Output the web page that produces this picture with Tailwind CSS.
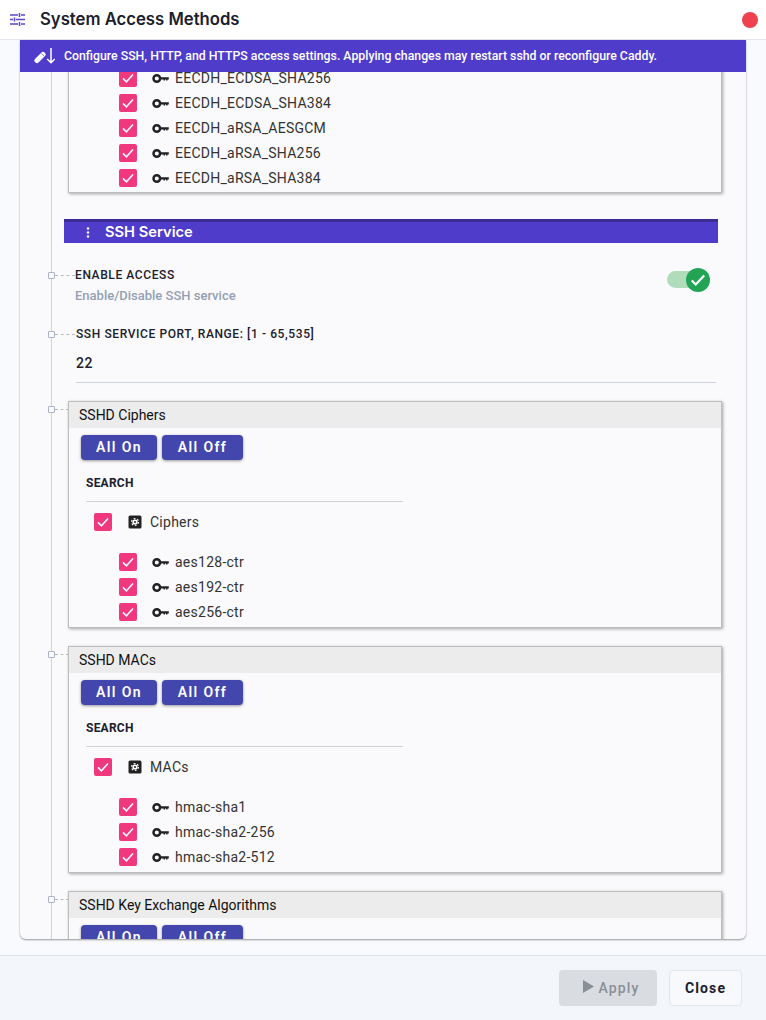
<!DOCTYPE html>
<html lang="en">

<head>
    <meta charset="UTF-8">
    <title>System Access Methods</title>
    <script src="https://cdn.jsdelivr.net/npm/@tailwindcss/browser@4"></script>
</head>

<body class="w-[766px] h-[1020px] overflow-hidden flex flex-col bg-[#f8fafd] font-['Roboto',sans-serif] text-[#222]">
    <svg class="hidden">
        <symbol id="key" viewBox="0 0 17 17"><circle cx="4.800" cy="8.500" r="3.300" fill="none" stroke="#222" stroke-width="2.500"/><path fill="#222" d="M8.500 7.200h8.300v2.400h-1.300v.8h-1.500v-.8h-1v.8h-1.500v-.8H8.500z"/></symbol>
        <symbol id="check" viewBox="0 0 18 18"><rect width="18" height="18" rx="2" fill="#f0387e"/><path d="M4 9.400l3.400 3.400L14 5.600" fill="none" stroke="#fff" stroke-width="1.500"/></symbol>
        <symbol id="gear" viewBox="0 0 16 16"><rect x="1.500" y="1.500" width="13" height="13" rx="1.500" fill="#222"/><circle cx="8" cy="8" r="2.600" fill="#fff"/><circle cx="8" cy="8" r="3.400" fill="none" stroke="#fff" stroke-width="1.300" stroke-dasharray="1.800 1.760"/><circle cx="8" cy="8" r="1" fill="#222"/></symbol>
    </svg>

    <!-- Header -->
    <div class="h-[40px] shrink-0 bg-white border-b border-[#e4e7ee] flex items-center pl-[10px] pr-[8px]">
        <svg class="w-[15px] h-[13px] text-[#5b48c9]" viewBox="0 0 15 13" fill="none" stroke="currentColor" stroke-width="1.500">
            <path d="M0 2h8M11 2h4M0 6.500h3M6 6.500h9M0 11h8M11 11h4M9.500 0v4M4.500 4.500v4M9.500 9v4"/>
        </svg>
        <h1 class="ml-[15px] text-[16.700px] font-semibold font-['Inter',sans-serif] text-[#1a202c]">System Access Methods</h1>
        <span class="ml-auto w-[16px] h-[16px] rounded-full bg-[#ef4050]"></span>
    </div>

    <!-- Panel -->
    <div class="mx-[20px] h-[899px] shrink-0 flex flex-col bg-[#fafafc] rounded-b-md shadow-[0_1px_2px_rgba(0,0,0,0.4)] overflow-hidden">
        <div class="h-[32px] shrink-0 bg-[#4f3ccb] flex items-center pl-[14px] text-white text-[12.300px] font-medium">
            <svg class="w-[21px] h-[16px] mr-[9px]" viewBox="0 0 21 16" fill="none" stroke="#fff">
                <path d="M3 12.500l6-6" stroke-width="5" stroke-linecap="round"/>
                <path d="M7.500 5.500l3 3" stroke="#4f3ccb" stroke-width="0.700"/>
                <path d="M17 0v14.500M13.200 11l3.800 3.800 3.800-3.800" stroke-width="1.500"/>
            </svg>
            Configure SSH, HTTP, and HTTPS access settings. Applying changes may restart sshd or reconfigure Caddy.
        </div>

        <div class="relative flex-1 overflow-hidden pl-[48px] pr-[24px]">
            <!-- timeline -->
            <div class="absolute left-[31px] top-0 bottom-0 w-px bg-[#cdd3e3]"></div>

            <!-- previous card, scrolled -->
            <div class="-mt-[6px] pb-[1px] pl-[50px] border border-t-0 border-[#bdbdbd] shadow-[1px_1px_3px_rgba(0,0,0,0.35)] text-[14px] tracking-[0.018em] text-[#333]">
                <div class="h-[25px] flex items-center"><svg class="w-[18px] h-[18px] -mt-[1px]"><use href="#check"/></svg><svg class="w-[17px] h-[17px] -mt-[1px] ml-[15px] mr-[6px]"><use href="#key"/></svg>EECDH_ECDSA_SHA256</div>
                <div class="h-[25px] flex items-center"><svg class="w-[18px] h-[18px] -mt-[1px]"><use href="#check"/></svg><svg class="w-[17px] h-[17px] -mt-[1px] ml-[15px] mr-[6px]"><use href="#key"/></svg>EECDH_ECDSA_SHA384</div>
                <div class="h-[25px] flex items-center"><svg class="w-[18px] h-[18px] -mt-[1px]"><use href="#check"/></svg><svg class="w-[17px] h-[17px] -mt-[1px] ml-[15px] mr-[6px]"><use href="#key"/></svg>EECDH_aRSA_AESGCM</div>
                <div class="h-[25px] flex items-center"><svg class="w-[18px] h-[18px] -mt-[1px]"><use href="#check"/></svg><svg class="w-[17px] h-[17px] -mt-[1px] ml-[15px] mr-[6px]"><use href="#key"/></svg>EECDH_aRSA_SHA256</div>
                <div class="h-[25px] flex items-center"><svg class="w-[18px] h-[18px] -mt-[1px]"><use href="#check"/></svg><svg class="w-[17px] h-[17px] -mt-[1px] ml-[15px] mr-[6px]"><use href="#key"/></svg>EECDH_aRSA_SHA384</div>
            </div>

            <!-- SSH Service -->
            <div class="mt-[26px] -ml-[4px] mr-[4px] h-[24px] bg-[#4f3ccb] border-t-[3px] border-[#3b2d96] flex items-center text-white">
                <svg class="ml-[22px] w-[4px] h-[11px]" viewBox="0 0 4 11" fill="#fff"><circle cx="2" cy="1.500" r="1.200"/><circle cx="2" cy="5.500" r="1.200"/><circle cx="2" cy="9.500" r="1.200"/></svg>
                <span class="ml-[15px] text-[14.700px] font-semibold font-['Inter',sans-serif]">SSH Service</span>
            </div>

            <!-- Enable access -->
            <div class="relative mt-[24px] h-[40px] ml-[7px] flex justify-between">
                <div class="absolute left-[-27px] top-[5px] w-[7px] h-[7px] border border-[#aab2c8] rounded-[1px] bg-[#fafafc]"></div>
                <div class="absolute left-[-20px] top-[8px] w-[20px] border-t border-dashed border-[#bbb]"></div>
                <div>
                    <div class="text-[12px] font-medium leading-[16px] tracking-[0.05em] text-[#1a202c]">ENABLE ACCESS</div>
                    <div class="mt-[5px] text-[13px] font-medium leading-[16px] text-[#94a0b4]">Enable/Disable SSH service</div>
                </div>
                <div class="relative w-[43px] h-[17px] mt-[4px] mr-[12px] rounded-full">
                    <div class="w-[33px] h-[17px] rounded-full bg-[#b0dcbc]"></div>
                    <div class="absolute right-0 top-[-3.500px] w-[24px] h-[24px] rounded-full bg-[#22a454] flex items-center justify-center">
                        <svg class="w-[18px] h-[18px]" viewBox="0 0 16 16" fill="none" stroke="#fff" stroke-width="2"><path d="M2.500 8.500l3.500 3.500 7.500-8"/></svg>
                    </div>
                </div>
            </div>

            <!-- Port -->
            <div class="relative mt-[19px] h-[57px] ml-[8px] mr-[6px] border-b border-[#cdd3e3]">
                <div class="absolute left-[-28px] top-[5px] w-[7px] h-[7px] border border-[#aab2c8] rounded-[1px] bg-[#fafafc]"></div>
                <div class="absolute left-[-21px] top-[8px] w-[20px] border-t border-dashed border-[#bbb]"></div>
                <div class="text-[12px] font-medium leading-[16px] tracking-[0.05em] text-[#1a202c]">SSH SERVICE PORT, RANGE: [1 - 65,535]</div>
                <div class="mt-[11px] text-[14px] font-medium tracking-[0.04em] leading-[20px] text-[#1a202c]">22</div>
            </div>

            <!-- SSHD Ciphers -->
            <div class="relative mt-[18px] h-[227px] border border-[#bdbdbd] shadow-[1px_1px_3px_rgba(0,0,0,0.35)]">
                <div class="absolute left-[-21px] top-[4px] w-[7px] h-[7px] border border-[#aab2c8] rounded-[1px] bg-[#fafafc]"></div>
                <div class="absolute left-[-14px] top-[7px] w-[14px] border-t border-dashed border-[#bbb]"></div>
                <div class="h-[26px] bg-[#ececec] pl-[10px] text-[14px] leading-[26px] text-[#111]">SSHD Ciphers</div>
                <div class="flex gap-[5px] mt-[7px] ml-[12px]">
                    <button class="w-[76px] h-[25px] rounded bg-[#4347ad] text-white text-[14px] font-semibold tracking-[0.1em] shadow-[0_1px_3px_rgba(0,0,0,0.4)]">All On</button>
                    <button class="w-[81px] h-[25px] rounded bg-[#4347ad] text-white text-[14px] font-semibold tracking-[0.1em] shadow-[0_1px_3px_rgba(0,0,0,0.4)]">All Off</button>
                </div>
                <div class="mt-[15px] ml-[17px] w-[317px] h-[27px] border-b border-[#d0d3da] text-[12px] font-bold tracking-[0.02em] leading-[16px] text-[#1a202c]">SEARCH</div>
                <div class="ml-[25px] mt-[10px] h-[20px] flex items-center text-[14px] tracking-[0.018em] text-[#333]">
                    <svg class="w-[18px] h-[18px]"><use href="#check"/></svg>
                    <svg class="w-[16px] h-[16px] ml-[15px] mr-[7px]"><use href="#gear"/></svg>Ciphers
                </div>
                <div class="ml-[50px] mt-[18px] text-[14px] tracking-[0.018em] text-[#333]">
                    <div class="h-[25px] flex items-center"><svg class="w-[18px] h-[18px] -mt-[1px]"><use href="#check"/></svg><svg class="w-[17px] h-[17px] -mt-[1px] ml-[15px] mr-[6px]"><use href="#key"/></svg>aes128-ctr</div>
                    <div class="h-[25px] flex items-center"><svg class="w-[18px] h-[18px] -mt-[1px]"><use href="#check"/></svg><svg class="w-[17px] h-[17px] -mt-[1px] ml-[15px] mr-[6px]"><use href="#key"/></svg>aes192-ctr</div>
                    <div class="h-[25px] flex items-center"><svg class="w-[18px] h-[18px] -mt-[1px]"><use href="#check"/></svg><svg class="w-[17px] h-[17px] -mt-[1px] ml-[15px] mr-[6px]"><use href="#key"/></svg>aes256-ctr</div>
                </div>
            </div>

            <!-- SSHD MACs -->
            <div class="relative mt-[18px] h-[227px] border border-[#bdbdbd] shadow-[1px_1px_3px_rgba(0,0,0,0.35)]">
                <div class="absolute left-[-21px] top-[4px] w-[7px] h-[7px] border border-[#aab2c8] rounded-[1px] bg-[#fafafc]"></div>
                <div class="absolute left-[-14px] top-[7px] w-[14px] border-t border-dashed border-[#bbb]"></div>
                <div class="h-[26px] bg-[#ececec] pl-[10px] text-[14px] leading-[26px] text-[#111]">SSHD MACs</div>
                <div class="flex gap-[5px] mt-[7px] ml-[12px]">
                    <button class="w-[76px] h-[25px] rounded bg-[#4347ad] text-white text-[14px] font-semibold tracking-[0.1em] shadow-[0_1px_3px_rgba(0,0,0,0.4)]">All On</button>
                    <button class="w-[81px] h-[25px] rounded bg-[#4347ad] text-white text-[14px] font-semibold tracking-[0.1em] shadow-[0_1px_3px_rgba(0,0,0,0.4)]">All Off</button>
                </div>
                <div class="mt-[15px] ml-[17px] w-[317px] h-[27px] border-b border-[#d0d3da] text-[12px] font-bold tracking-[0.02em] leading-[16px] text-[#1a202c]">SEARCH</div>
                <div class="ml-[25px] mt-[10px] h-[20px] flex items-center text-[14px] tracking-[0.018em] text-[#333]">
                    <svg class="w-[18px] h-[18px]"><use href="#check"/></svg>
                    <svg class="w-[16px] h-[16px] ml-[15px] mr-[7px]"><use href="#gear"/></svg>MACs
                </div>
                <div class="ml-[50px] mt-[18px] text-[14px] tracking-[0.018em] text-[#333]">
                    <div class="h-[25px] flex items-center"><svg class="w-[18px] h-[18px] -mt-[1px]"><use href="#check"/></svg><svg class="w-[17px] h-[17px] -mt-[1px] ml-[15px] mr-[6px]"><use href="#key"/></svg>hmac-sha1</div>
                    <div class="h-[25px] flex items-center"><svg class="w-[18px] h-[18px] -mt-[1px]"><use href="#check"/></svg><svg class="w-[17px] h-[17px] -mt-[1px] ml-[15px] mr-[6px]"><use href="#key"/></svg>hmac-sha2-256</div>
                    <div class="h-[25px] flex items-center"><svg class="w-[18px] h-[18px] -mt-[1px]"><use href="#check"/></svg><svg class="w-[17px] h-[17px] -mt-[1px] ml-[15px] mr-[6px]"><use href="#key"/></svg>hmac-sha2-512</div>
                </div>
            </div>

            <!-- SSHD Key Exchange, cut off by the panel -->
            <div class="relative mt-[18px] h-[227px] border border-[#bdbdbd] shadow-[1px_1px_3px_rgba(0,0,0,0.35)]">
                <div class="absolute left-[-21px] top-[4px] w-[7px] h-[7px] border border-[#aab2c8] rounded-[1px] bg-[#fafafc]"></div>
                <div class="absolute left-[-14px] top-[7px] w-[14px] border-t border-dashed border-[#bbb]"></div>
                <div class="h-[26px] bg-[#ececec] pl-[10px] text-[14px] leading-[26px] text-[#111]">SSHD Key Exchange Algorithms</div>
                <div class="flex gap-[5px] mt-[7px] ml-[12px]">
                    <button class="w-[76px] h-[25px] rounded bg-[#4347ad] text-white text-[14px] font-semibold tracking-[0.1em] shadow-[0_1px_3px_rgba(0,0,0,0.4)]">All On</button>
                    <button class="w-[81px] h-[25px] rounded bg-[#4347ad] text-white text-[14px] font-semibold tracking-[0.1em] shadow-[0_1px_3px_rgba(0,0,0,0.4)]">All Off</button>
                </div>
            </div>
        </div>
    </div>

    <!-- Footer -->
    <div class="mt-[16px] flex-1 bg-[#f3f6fb] border-t border-[#e2e5ec] flex justify-end items-start pt-[14px] pr-[24px] gap-[12px]">
        <button class="w-[98px] h-[36px] pl-[6px] rounded bg-[#d9dce1] text-[#8a8f96] text-[14px] font-medium tracking-[0.08em] flex items-center justify-center">
            <svg class="w-[11px] h-[13px] mr-[5px] -mt-[3px]" viewBox="0 0 11 13" fill="#8a8f96"><path d="M0 0l11 6.500-11 6.500z"/></svg>Apply
        </button>
        <button class="w-[73px] h-[36px] rounded border border-[#e2e6ee] bg-[#f8f9fc] text-[#1a202c] text-[14px] font-bold tracking-[0.08em]">Close</button>
    </div>
</body>

</html>
